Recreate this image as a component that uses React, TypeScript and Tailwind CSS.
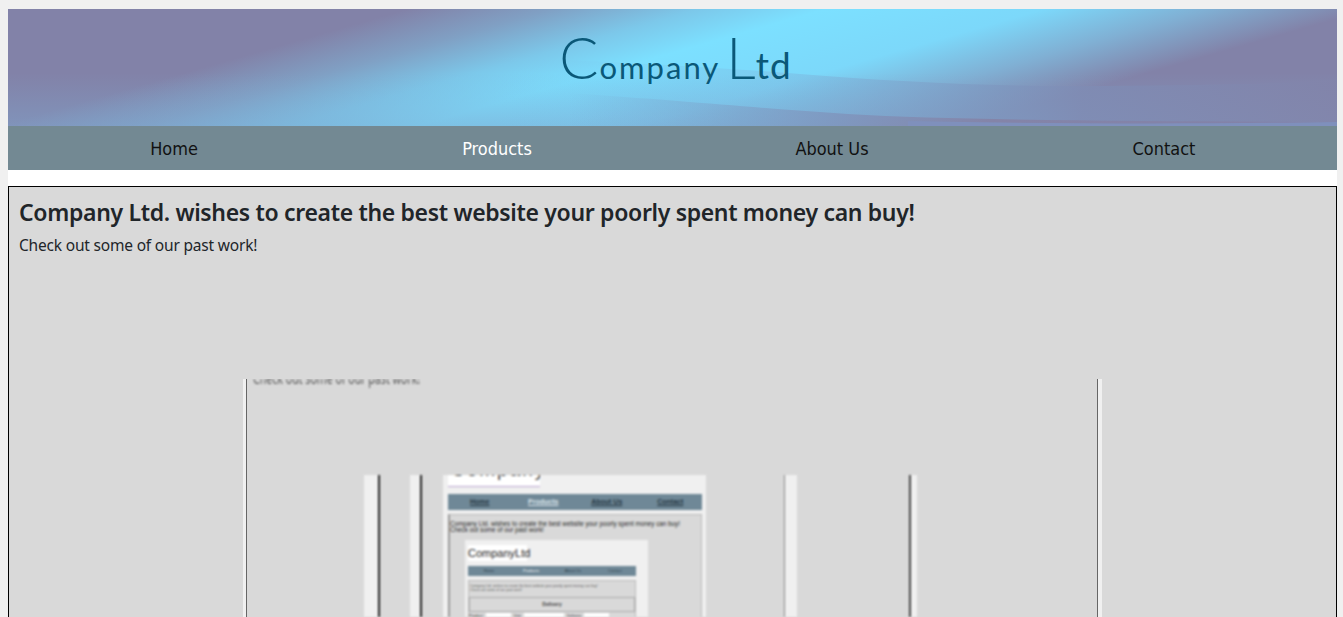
const navItems = ['Home', 'Products', 'About Us', 'Contact']

// header artwork, blue band running across a purple background
const HeaderArt = () => (
  <svg className="absolute inset-0 w-full h-full" viewBox="0 0 1329 117" preserveAspectRatio="none">
    <defs>
      <linearGradient id="sky" gradientUnits="userSpaceOnUse" x1="0" y1="0" x2="137" y2="480">
        <stop offset="0.22" stopColor="#8282a8" />
        <stop offset="0.3" stopColor="#80a0c4" />
        <stop offset="0.38" stopColor="#7cc8ea" />
        <stop offset="0.45" stopColor="#7ce0ff" />
        <stop offset="0.57" stopColor="#7cd8fa" />
        <stop offset="0.66" stopColor="#80b0d4" />
        <stop offset="0.75" stopColor="#8282a8" />
      </linearGradient>
      <linearGradient id="haze" x1="0" y1="0" x2="0" y2="1">
        <stop offset="0.55" stopColor="#7fa4cc" stopOpacity="0" />
        <stop offset="1" stopColor="#7fa4cc" stopOpacity="0.5" />
      </linearGradient>
      <linearGradient id="bandOne" x1="0" y1="0" x2="1" y2="0">
        <stop offset="0" stopColor="#7ccaf0" stopOpacity="0" />
        <stop offset="0.35" stopColor="#7cb4dc" stopOpacity="0.4" />
        <stop offset="0.7" stopColor="#7f8cb4" stopOpacity="0.85" />
        <stop offset="1" stopColor="#8284aa" stopOpacity="0.85" />
      </linearGradient>
      <linearGradient id="bandTwo" x1="0" y1="0" x2="1" y2="0">
        <stop offset="0" stopColor="#7ca8d0" stopOpacity="0" />
        <stop offset="0.35" stopColor="#7f94bc" stopOpacity="0.8" />
        <stop offset="0.55" stopColor="#8484a8" />
        <stop offset="1" stopColor="#8282a8" />
      </linearGradient>
    </defs>
    <rect width="1329" height="117" fill="url(#sky)" />
    <rect width="1329" height="117" fill="url(#haze)" />
    <path d="M480 48C600 52 700 58 780 64C900 74 1000 78 1100 77C1200 76 1280 74 1329 72L1329 117L480 117Z" fill="url(#bandOne)" />
    <path d="M560 84C680 92 760 100 840 105C960 112 1150 112 1329 113L1329 117L560 117Z" fill="url(#bandTwo)" />
    <path d="M900 112C1050 115 1200 115 1329 113L1329 117L900 117Z" fill="#7f90bc" />
  </svg>
)

// the screenshot inside the screenshot, two levels down
const InnerPage = () => (
  <div className="w-[263px] h-[142px] shrink-0 bg-[#f0f0f0] px-[5px] overflow-hidden font-['Liberation_Sans',sans-serif]">
    <div className="w-[92px] h-[12px] bg-white border-b border-[#b9a4d0] overflow-hidden">
      <div className="-mt-[17px] ml-[3px] text-[19px] leading-[24px] tracking-[2px] text-[#444]">CompanyLtd</div>
    </div>
    <div className="mt-[7px] w-[254px] h-[16px] bg-[#6f8897] grid grid-cols-4 items-center text-center text-[7px] font-bold text-[#23343f]">
      <span className="underline">Home</span>
      <span className="underline text-[#dfe8ee]">Products</span>
      <span className="underline">About Us</span>
      <span className="underline">Contact</span>
    </div>
    <div className="mt-[4px] w-[254px] h-[110px] bg-[#d9d9d9] border border-[#bbb] border-l-[2px] border-l-[#999]">
      <p className="mt-[6px] text-[6.3px] leading-[6px] text-[#222] whitespace-nowrap">
        Company Ltd. wishes to create the best website your poorly spent money can buy!
        <br />
        Check out some of our past work!
      </p>
      <div className="ml-[15px] mt-[7px] w-[183px] h-[92px] bg-[#f0f0f0] px-[3px] pt-[5px]">
        <div className="w-[59px] h-[16px] bg-white text-[11px] leading-[16px] text-center text-[#222]">CompanyLtd</div>
        <div className="mt-[5px] w-[168px] h-[10px] bg-[#6f8897] grid grid-cols-4 items-center text-center text-[4px] text-[#2c3d48]">
          <span>Home</span>
          <span className="text-white">Products</span>
          <span>About Us</span>
          <span>Contact</span>
        </div>
        <div className="mt-[4px] w-[168px] h-[52px] bg-[#d9d9d9] border border-[#bbb]">
          <p className="text-[3.5px] leading-[4px] pt-[3px] pl-[1px] text-[#555] whitespace-nowrap">
            Company Ltd. wishes to create the best website your poorly spent money can buy!
            <br />
            Check out some of our past work!
          </p>
          <div className="mt-[5px] h-[15px] border border-[#aaa] flex items-center justify-center text-[5px] font-bold text-[#444]">
            Delivery
          </div>
          <div className="flex gap-[3px] text-[4px] text-[#333] mt-[1px]">
            <span>Product</span>
            <span className="w-[25px] h-[6px] bg-white" />
            <span>Unit</span>
            <span className="w-[40px] h-[6px] bg-white" />
            <span>Delivery</span>
            <span className="w-[25px] h-[6px] bg-white" />
          </div>
        </div>
      </div>
    </div>
  </div>
)

const PastWork = () => (
  <div className="ml-[224px] mt-[122px] w-[859px] h-[238px] flex overflow-hidden">
    {/* left edge */}
    <div className="w-[3px] bg-[#f0f0f0]" />
    <div className="w-px bg-[#666]" />

    <div className="flex-1 min-w-0 blur-[1px]">
      <div className="h-[96px] overflow-hidden pl-[6px]">
        <p className="-mt-[8px] text-[15.6px] leading-[15px] text-[#555] font-['Noto_Sans',sans-serif] scale-x-[0.68] origin-left whitespace-nowrap">
          Check out some of our past work!
        </p>
      </div>
      <div className="flex h-[142px]">
        <div className="ml-[117px] w-[14px] bg-[#f0f0f0]" />
        <div className="w-[2px] bg-[#222]" />
        <div className="ml-[30px] w-[10px] bg-[#f0f0f0]" />
        <div className="w-[2px] bg-[#222]" />
        <div className="w-[21px]" />
        <InnerPage />
        <div className="ml-[78px] w-px bg-[#888]" />
        <div className="w-[12px] bg-[#f0f0f0]" />
        <div className="ml-[112px] w-[2px] bg-[#444]" />
        <div className="w-[6px] bg-[#f0f0f0]" />
      </div>
    </div>

    {/* right edge */}
    <div className="w-px bg-[#666]" />
    <div className="w-[4px] bg-[#f0f0f0]" />
  </div>
)

export default function App() {
  return (
    <div className="h-screen overflow-hidden bg-[#f0f0f0] pt-[9px] pl-2 pr-[6px] flex flex-col font-['Noto_Sans',sans-serif]">
      <header className="relative h-[117px] shrink-0 flex items-center justify-center">
        <HeaderArt />
        {/* APP LOGO */}
        <div className="relative -mt-[22px] ml-[6px] flex items-baseline text-[#0a5878] font-['Lato',sans-serif] leading-none">
          <span className="text-[58px] font-light">C</span>
          <span className="text-[31px] tracking-[2px] ml-[1px]">ompany</span>
          <span className="text-[58px] font-light ml-[6px]">L</span>
          <span className="text-[37px] tracking-[1px]">td</span>
        </div>
      </header>

      {/* NAV ITEMS */}
      <nav className="h-[44px] shrink-0 bg-[#738993] pt-[3px] grid grid-cols-[332px_314px_356px_308px] items-center text-center text-[17px] text-[#111] font-['DejaVu_Sans',sans-serif]">
        {navItems.map((item) => (
          <a key={item} className={`scale-x-[0.95] ${item === 'Products' ? 'text-white' : ''}`}>
            {item}
          </a>
        ))}
      </nav>

      <div className="h-[16px] shrink-0 bg-white" />

      <main className="flex-1 bg-[#d9d9d9] border border-black border-b-0 pl-[10px] pt-[9px] text-[#212529]">
        <h1 className="text-[23px] leading-[32px] font-semibold whitespace-nowrap tracking-[-0.33px]">
          Company Ltd. wishes to create the best website your poorly spent money can buy!
        </h1>
        <p className="mt-[5px] text-[15.5px] leading-[24px] tracking-[-0.19px]">Check out some of our past work!</p>
        <PastWork />
      </main>
    </div>
  )
}
